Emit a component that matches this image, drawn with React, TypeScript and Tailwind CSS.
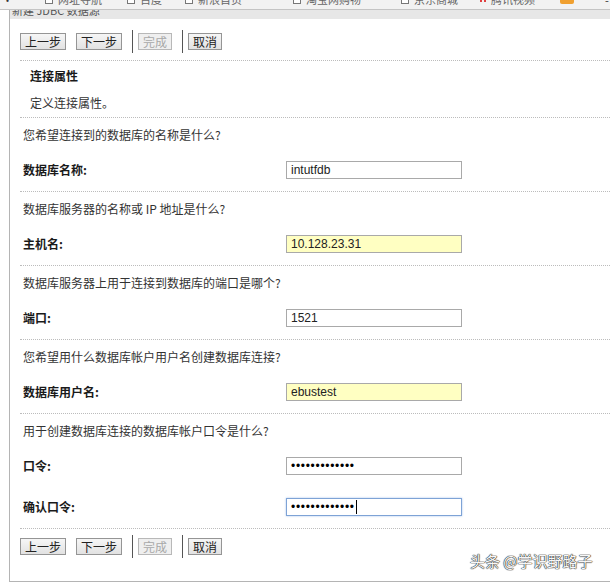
import React from 'react';

const cjk = "font-['Noto_Sans_CJK_SC','Liberation_Sans',sans-serif]";

const toolbarItems = [
    { w: 'w-[82px]', icon: 'box', text: '网址导航' },
    { w: 'w-[58px]', icon: 'box', text: '百度' },
    { w: 'w-[108px]', icon: 'box', text: '新浪首页' },
    { w: 'w-[108px]', icon: 'box', text: '淘宝网购物' },
    { w: 'w-[79px]', icon: 'box', text: '京东商城' },
    { w: 'w-[80px]', icon: 'red', text: '腾讯视频' },
    { w: 'w-[45px]', icon: 'orange', text: '' },
];

function Toolbar() {
    return (
        <div className="flex h-[10px] overflow-hidden border-b border-[#c4c4c4] bg-[#f2f2f2] text-[11px] text-[#666]">
            <div className="w-[45px] pl-[2px] -mt-[6px] leading-[12px] text-[#333]">•</div>
            {toolbarItems.map((it, i) => (
                <div key={i} className={`${it.w} flex items-start gap-[5px] overflow-hidden`}>
                    {it.icon === 'box' && (
                        <div className="-mt-[4px] h-[8px] w-[8px] shrink-0 border border-[#777] bg-white" />
                    )}
                    {it.icon === 'red' && (
                        <div className="-mt-[3px] flex shrink-0 gap-[2px]">
                            <div className="h-[5px] w-[2px] bg-[#e04040]" />
                            <div className="h-[5px] w-[2px] bg-[#e04040]" />
                        </div>
                    )}
                    {it.icon === 'orange' && (
                        <div className="-mt-[4px] h-[8px] w-[14px] shrink-0 rounded-[2px] bg-[#f0a030]" />
                    )}
                    <span className="-mt-[7px] whitespace-nowrap leading-[12px]">{it.text}</span>
                </div>
            ))}
            <div className="-mt-[6px] leading-[12px] text-[#333]">-</div>
        </div>
    );
}

function Btn({ label, disabled }: { label: string; disabled?: boolean }) {
    return (
        <div
            className={`flex h-[17px] items-center border px-[4px] leading-[15px] ${
                disabled
                    ? 'border-[#b8b8b8] bg-[#efefef] text-[#a8a8a8]'
                    : 'border-[#959595] bg-gradient-to-b from-[#f6f6f6] to-[#e2e2e2] text-[#222]'
            }`}
        >
            {label}
        </div>
    );
}

function ButtonRow() {
    return (
        <div className="flex h-[23px] items-center">
            <Btn label="上一步" />
            <div className="ml-[10px]">
                <Btn label="下一步" />
            </div>
            <div className="ml-[10px] h-[23px] w-px bg-[#555]" />
            <div className="ml-[5px]">
                <Btn label="完成" disabled />
            </div>
            <div className="ml-[10px] h-[23px] w-px bg-[#555]" />
            <div className="ml-[5px]">
                <Btn label="取消" />
            </div>
        </div>
    );
}

const Dotted = ({ className = '' }: { className?: string }) => (
    <div className={`border-t border-dotted border-[#bcbcbc] ${className}`} />
);

function Field({
    label,
    value,
    yellow,
    password,
    focused,
    className = '',
}: {
    label: string;
    value: string;
    yellow?: boolean;
    password?: boolean;
    focused?: boolean;
    className?: string;
}) {
    return (
        <div className={`flex h-[18px] items-center pl-[3px] ${className}`}>
            <div className="w-[263px] font-bold leading-[16px] text-[#1a1a1a]">{label}</div>
            <div
                className={`flex h-[18px] w-[176px] items-center border pl-[4px] font-['Liberation_Sans',sans-serif] text-[12px] text-[#222] ${
                    yellow ? 'bg-[#ffffc2]' : 'bg-white'
                } ${focused ? 'border-[#7ea3d6] shadow-[0_0_2px_#a8c4ec]' : 'border-[#a9a9a9]'}`}
            >
                {password ? (
                    <span className="tracking-[0.7px] text-black">{'•'.repeat(13)}</span>
                ) : (
                    value
                )}
                {focused && <span className="ml-[1px] h-[14px] w-px bg-black" />}
            </div>
        </div>
    );
}

function Question({ text }: { text: string }) {
    return <div className="mt-[9px] pl-[3px] leading-[16px]">{text}</div>;
}

const sections = [
    { q: '您希望连接到的数据库的名称是什么?', label: '数据库名称:', value: 'intutfdb' },
    { q: '数据库服务器的名称或 IP 地址是什么?', label: '主机名:', value: '10.128.23.31', yellow: true },
    { q: '数据库服务器上用于连接到数据库的端口是哪个?', label: '端口:', value: '1521' },
    { q: '您希望用什么数据库帐户用户名创建数据库连接?', label: '数据库用户名:', value: 'ebustest', yellow: true },
];

export default function App() {
    return (
        <div className={`relative h-[583px] w-[610px] overflow-hidden bg-white text-[12px] text-[#333] ${cjk}`}>
            <Toolbar />
            <div className="ml-[9px] h-[572px] border-b border-l border-[#b4b4b4]">
                <div className="h-[9px] overflow-hidden bg-[#e7e7e7] pl-[2px]">
                    <div className="-mt-[6px] text-[11px] leading-[12px] text-[#555]">新建 JDBC 数据源</div>
                </div>
                <div className="pl-[10px]">
                    <div className="mt-[11px]">
                        <ButtonRow />
                    </div>
                    <Dotted className="mt-[7px]" />
                    <div className="mt-[7px] pl-[10px] font-bold leading-[16px] text-[#1a1a1a]">连接属性</div>
                    <div className="mt-[11px] pl-[10px] leading-[16px]">定义连接属性。</div>
                    <Dotted className="mt-[6px]" />

                    {sections.map((s) => (
                        <div key={s.label}>
                            <Question text={s.q} />
                            <Field
                                className="mt-[18px]"
                                label={s.label}
                                value={s.value}
                                yellow={s.yellow}
                            />
                            <Dotted className="mt-[12px]" />
                        </div>
                    ))}

                    <Question text="用于创建数据库连接的数据库帐户口令是什么?" />
                    <Field className="mt-[18px]" label="口令:" value="" password />
                    <Field className="mt-[23px]" label="确认口令:" value="" password focused />
                    <Dotted className="mt-[12px]" />

                    <div className="mt-[6px]">
                        <ButtonRow />
                    </div>
                </div>
            </div>

            <div className="absolute left-[470px] top-[551px] text-[15px] leading-[20px] text-[#f7f7f7] [text-shadow:0_0_1px_#222,0_0_1px_#222,0_0_1px_#222]">
                头条 @学识野路子
            </div>
        </div>
    );
}
